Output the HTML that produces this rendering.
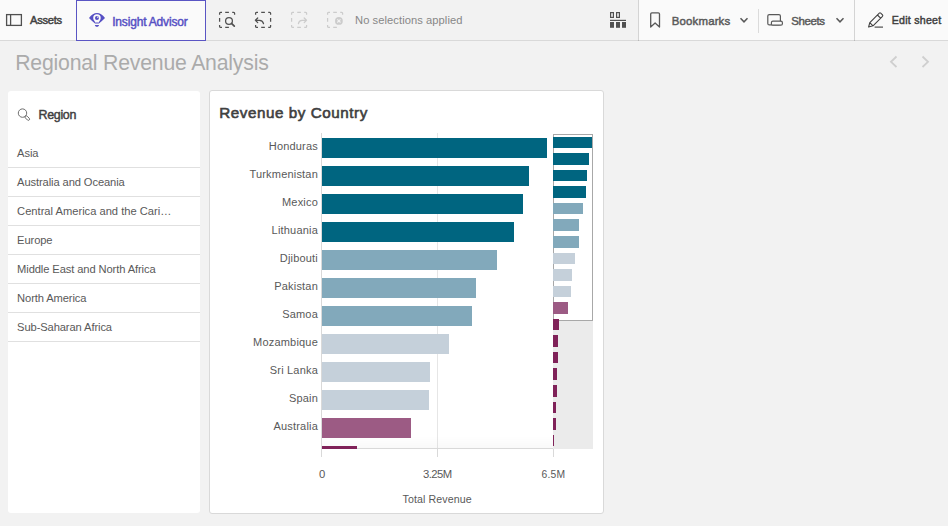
<!DOCTYPE html>
<html><head><meta charset="utf-8">
<style>
*{box-sizing:border-box;margin:0;padding:0}
html,body{width:948px;height:526px;overflow:hidden;background:#f2f2f2;font-family:"Liberation Sans",sans-serif;position:relative}
.abs{position:absolute}
.t{position:absolute;white-space:nowrap;line-height:20px}
#tb{position:absolute;left:0;top:0;width:948px;height:41px;background:#fafafa;border-bottom:1px solid #d9d9d9}
#tbmid{position:absolute;left:206px;top:0;width:432px;height:40px;background:#f2f2f2}
.vsep{position:absolute;width:1px;background:rgba(0,0,0,0.15)}
#ia{position:absolute;left:76px;top:0;width:130px;height:41px;border:1px solid #5a55c4;background:#fafafa}
#fp{position:absolute;left:8px;top:91px;width:192px;height:422px;background:#fff;border-radius:3px}
.li{color:#595959}
.sep{position:absolute;left:8px;width:192px;height:1px;background:#e0e0e0}
#cp{position:absolute;left:209px;top:90px;width:395px;height:424px;background:#fff;border:1px solid #d9d9d9;border-radius:3px}
.bar{position:absolute;left:322px}
.lbl{left:150px;width:168px;text-align:right;color:#595959}
.mbar{position:absolute;left:553px;height:11.6px}
</style></head><body>
<div id="tb"></div>
<div id="tbmid"></div>
<div class="vsep" style="left:638px;top:0;height:41px"></div>
<div class="vsep" style="left:758px;top:9px;height:24px;background:rgba(0,0,0,0.12)"></div>
<div class="vsep" style="left:854px;top:0;height:41px"></div>
<div id="ia"></div>
<div class="t" style="left:30.0px;top:9.8px;font-size:11.17px;letter-spacing:-0.26px;color:#404040;font-weight:400;-webkit-text-stroke:0.45px #404040;">Assets</div>
<div class="t" style="left:112.2px;top:11.5px;font-size:12.01px;letter-spacing:-0.179px;color:#5650c4;font-weight:400;-webkit-text-stroke:0.45px #5650c4;">Insight Advisor</div>
<div class="t" style="left:355.0px;top:9.8px;font-size:11.17px;letter-spacing:0.07px;color:#878787;font-weight:400;">No selections applied</div>
<div class="t" style="left:671.8px;top:10.7px;font-size:11.45px;letter-spacing:0.15px;color:#595959;font-weight:400;-webkit-text-stroke:0.45px #595959;">Bookmarks</div>
<div class="t" style="left:791.2px;top:10.7px;font-size:11.45px;letter-spacing:-0.36px;color:#595959;font-weight:400;-webkit-text-stroke:0.45px #595959;">Sheets</div>
<div class="t" style="left:891.7px;top:10.1px;font-size:10.61px;letter-spacing:0.256px;color:#404040;font-weight:400;-webkit-text-stroke:0.45px #404040;">Edit sheet</div>
<div class="t" style="left:15.2px;top:52.8px;font-size:21.23px;letter-spacing:-0.196px;color:#ababab;font-weight:400;">Regional Revenue Analysis</div>
<div id="fp"></div>
<div class="t" style="left:38.6px;top:105.2px;font-size:12.43px;letter-spacing:-0.32px;color:#404040;font-weight:400;-webkit-text-stroke:0.45px #404040;">Region</div>
<div class="t li" style="top:143.2px;left:17.1px;font-size:11.17px;letter-spacing:-0.105px">Asia</div><div class="sep" style="top:167px"></div><div class="t li" style="top:172.2px;left:17.1px;font-size:11.17px;letter-spacing:-0.105px">Australia and Oceania</div><div class="sep" style="top:196px"></div><div class="t li" style="top:201.2px;left:17.1px;font-size:11.17px;letter-spacing:-0.005px">Central America and the Cari…</div><div class="sep" style="top:225px"></div><div class="t li" style="top:230.2px;left:17.1px;font-size:11.17px;letter-spacing:-0.105px">Europe</div><div class="sep" style="top:254px"></div><div class="t li" style="top:259.2px;left:17.1px;font-size:11.17px;letter-spacing:-0.105px">Middle East and North Africa</div><div class="sep" style="top:283px"></div><div class="t li" style="top:288.2px;left:17.1px;font-size:11.17px;letter-spacing:-0.105px">North America</div><div class="sep" style="top:312px"></div><div class="t li" style="top:317.2px;left:17.1px;font-size:11.17px;letter-spacing:-0.105px">Sub-Saharan Africa</div><div class="sep" style="top:341px"></div>
<div id="cp"></div>
<div class="t" style="left:219.2px;top:102.80000000000001px;font-size:15.22px;letter-spacing:0.553px;color:#404040;font-weight:400;-webkit-text-stroke:0.6px #404040;">Revenue by Country</div>
<div class="abs" style="left:321px;top:133px;width:1px;height:324px;background:#d9d9d9"></div>
<div class="abs" style="left:437px;top:133px;width:1px;height:315px;background:#e6e6e6"></div>
<div class="abs" style="left:437px;top:449px;width:1px;height:8px;background:#d9d9d9"></div>
<div class="abs" style="left:553px;top:448px;width:1px;height:9px;background:#d9d9d9"></div>
<div class="abs" style="left:322px;top:436px;width:231px;height:12px;background:linear-gradient(rgba(0,0,0,0),rgba(0,0,0,0.025))"></div>
<div class="abs" style="left:321px;top:448px;width:232px;height:1px;background:#d9d9d9"></div>
<div class="bar" style="top:138px;width:225.0px;background:#006580;height:19.6px"></div><div class="t lbl" style="top:136.1px;font-size:11.03px;letter-spacing:0.186px">Honduras</div><div class="bar" style="top:166px;width:206.7px;background:#006580;height:19.6px"></div><div class="t lbl" style="top:164.1px;font-size:11.03px;letter-spacing:0.186px">Turkmenistan</div><div class="bar" style="top:194px;width:200.6px;background:#006580;height:19.6px"></div><div class="t lbl" style="top:192.1px;font-size:11.03px;letter-spacing:0.186px">Mexico</div><div class="bar" style="top:222px;width:191.5px;background:#006580;height:19.6px"></div><div class="t lbl" style="top:220.1px;font-size:11.03px;letter-spacing:0.186px">Lithuania</div><div class="bar" style="top:250px;width:175.4px;background:#82a9bb;height:19.6px"></div><div class="t lbl" style="top:248.1px;font-size:11.03px;letter-spacing:0.186px">Djibouti</div><div class="bar" style="top:278px;width:153.5px;background:#82a9bb;height:19.6px"></div><div class="t lbl" style="top:276.1px;font-size:11.03px;letter-spacing:0.186px">Pakistan</div><div class="bar" style="top:306px;width:149.8px;background:#82a9bb;height:19.6px"></div><div class="t lbl" style="top:304.1px;font-size:11.03px;letter-spacing:0.186px">Samoa</div><div class="bar" style="top:334px;width:127.3px;background:#c5d0da;height:19.6px"></div><div class="t lbl" style="top:332.1px;font-size:11.03px;letter-spacing:0.186px">Mozambique</div><div class="bar" style="top:362px;width:107.8px;background:#c5d0da;height:19.6px"></div><div class="t lbl" style="top:360.1px;font-size:11.03px;letter-spacing:0.186px">Sri Lanka</div><div class="bar" style="top:390px;width:107.1px;background:#c5d0da;height:19.6px"></div><div class="t lbl" style="top:388.1px;font-size:11.03px;letter-spacing:0.186px">Spain</div><div class="bar" style="top:418px;width:88.5px;background:#9c5b84;height:19.6px"></div><div class="t lbl" style="top:416.1px;font-size:11.03px;letter-spacing:0.186px">Australia</div><div class="bar" style="top:446px;width:35.3px;background:#802259;height:3px"></div>
<div class="abs" style="left:553px;top:134px;width:40px;height:315px;background:#ebebeb"></div>
<div class="abs" style="left:553px;top:134px;width:40px;height:187px;background:#fff;border:1px solid #a8a8a8"></div>
<div class="mbar" style="top:136.6px;width:38.6px;background:#006580"></div><div class="mbar" style="top:153.2px;width:35.5px;background:#006580"></div><div class="mbar" style="top:169.7px;width:34.4px;background:#006580"></div><div class="mbar" style="top:186.3px;width:32.9px;background:#006580"></div><div class="mbar" style="top:202.8px;width:30.1px;background:#82a9bb"></div><div class="mbar" style="top:219.4px;width:26.3px;background:#82a9bb"></div><div class="mbar" style="top:236.0px;width:25.7px;background:#82a9bb"></div><div class="mbar" style="top:252.5px;width:21.8px;background:#c5d0da"></div><div class="mbar" style="top:269.1px;width:18.5px;background:#c5d0da"></div><div class="mbar" style="top:285.6px;width:18.4px;background:#c5d0da"></div><div class="mbar" style="top:302.2px;width:15.2px;background:#9c5b84"></div><div class="mbar" style="top:318.8px;width:6.1px;background:#802259"></div><div class="mbar" style="top:335.3px;width:5.2px;background:#802259"></div><div class="mbar" style="top:351.9px;width:4.5px;background:#802259"></div><div class="mbar" style="top:368.4px;width:4.0px;background:#802259"></div><div class="mbar" style="top:385.0px;width:3.9px;background:#802259"></div><div class="mbar" style="top:401.6px;width:3.2px;background:#802259"></div><div class="mbar" style="top:418.1px;width:2.6px;background:#802259"></div><div class="mbar" style="top:434.7px;width:1.1px;background:#802259"></div>
<div class="t" style="left:319px;top:463.9px;font-size:11.31px;color:#595959">0</div>
<div class="t" style="left:423.0px;top:463.9px;font-size:11.31px;letter-spacing:-0.575px;color:#595959;font-weight:400;">3.25M</div>
<div class="t" style="left:541.6px;top:464.8px;font-size:10.34px;letter-spacing:0.2px;color:#595959;font-weight:400;">6.5M</div>
<div class="t" style="left:402.5px;top:488.7px;font-size:10.61px;letter-spacing:0.108px;color:#595959;font-weight:400;">Total Revenue</div>

<svg class="abs" style="left:0;top:0" width="948" height="130">
  <rect x="6.6" y="14.6" width="14.8" height="10.8" fill="none" stroke="#505050" stroke-width="1.3"/>
  <line x1="10.6" y1="14.6" x2="10.6" y2="25.4" stroke="#505050" stroke-width="1.3"/>
  <!-- eye -->
  <path d="M89,17.9 C91.5,14.5 94.2,12.9 97,12.9 C99.8,12.9 102.5,14.5 105,17.9 C103,20.2 100.8,21.8 99,23.6 H95 C93.2,21.8 91,20.2 89,17.9 Z" fill="#5650c4"/>
  <path d="M93.2,18 A3.75,3.75 0 1 1 100.7,18 C100.7,19.5 99.9,20.5 99.2,21.4 L98.9,22.4 H95.1 L94.8,21.4 C94.1,20.5 93.2,19.5 93.2,18 Z" fill="#fafafa"/>
  <circle cx="96.95" cy="17.9" r="2" fill="#5650c4"/>
  <circle cx="97.7" cy="17.2" r="0.65" fill="#fafafa"/>
  <path d="M94.9,24.9 H99 C99,26 98.1,26.8 96.95,26.8 C95.8,26.8 94.9,26 94.9,24.9 Z" fill="#5650c4"/>
  <g transform="translate(219.6,12.4)"><path d="M0,2.4 V0.9 Q0,0 0.9,0 H2.4 M5.6,0 H9.3 M12.6,0 H14.1 Q15,0 15,0.9 V2.4 M9.3,15 H5.6 M2.4,15 H0.9 Q0,15 0,14.1 V12.6 M0,9.3 V5.7" fill="none" stroke="#505050" stroke-width="1.25"/></g>
  <circle cx="229" cy="20.9" r="3.4" fill="none" stroke="#505050" stroke-width="1.25"/>
  <line x1="231.5" y1="23.4" x2="234.3" y2="26.2" stroke="#505050" stroke-width="1.7" stroke-linecap="round"/>
  <g transform="translate(255.6,12.4)"><path d="M0,2.4 V0.9 Q0,0 0.9,0 H2.4 M5.6,0 H9.3 M12.6,0 H14.1 Q15,0 15,0.9 V2.4 M15,5.7 V9.3 M15,12.6 V14.1 Q15,15 14.1,15 H12.6 M9.3,15 H5.6 M2.4,15 H0.9 Q0,15 0,14.1 V12.6" fill="none" stroke="#505050" stroke-width="1.25"/></g>
  <path d="M257.7,18 L255.4,20.3 L257.7,22.6 M255.4,20.3 H259.5 Q262.8,20.5 263.5,23.6" fill="none" stroke="#505050" stroke-width="1.25" stroke-linecap="round" stroke-linejoin="round"/>
  <g transform="translate(291.6,12.4)"><path d="M0,2.4 V0.9 Q0,0 0.9,0 H2.4 M5.6,0 H9.3 M12.6,0 H14.1 Q15,0 15,0.9 V2.4 M15,12.6 V14.1 Q15,15 14.1,15 H12.6 M9.3,15 H5.6 M2.4,15 H0.9 Q0,15 0,14.1 V12.6 M0,9.3 V5.7" fill="none" stroke="#cccccc" stroke-width="1.25"/></g>
  <path d="M304.2,18 L306.5,20.3 L304.2,22.6 M306.5,20.3 H302 Q299,20.5 298.4,23.6" fill="none" stroke="#cccccc" stroke-width="1.25" stroke-linecap="round" stroke-linejoin="round"/>
  <g transform="translate(327.6,12.4)"><path d="M0,2.4 V0.9 Q0,0 0.9,0 H2.4 M5.6,0 H9.3 M12.6,0 H14.1 Q15,0 15,0.9 V2.4 M9.3,15 H5.6 M2.4,15 H0.9 Q0,15 0,14.1 V12.6 M0,9.3 V5.7" fill="none" stroke="#cccccc" stroke-width="1.25"/></g>
  <circle cx="338.9" cy="20.9" r="3.9" fill="#cccccc"/>
  <path d="M337.3,19.3 L340.5,22.5 M340.5,19.3 L337.3,22.5" stroke="#f2f2f2" stroke-width="1.1"/>
  <!-- grid icon -->
  <rect x="610.6" y="12.6" width="2.8" height="4.8" fill="none" stroke="#505050" stroke-width="1.2"/>
  <rect x="616.6" y="12.6" width="2.8" height="4.8" fill="none" stroke="#505050" stroke-width="1.2"/>
  <rect x="610" y="19.8" width="16" height="1.2" fill="#505050"/>
  <rect x="610" y="22" width="4" height="5.8" fill="#505050"/>
  <rect x="616" y="22" width="4" height="5.8" fill="#505050"/>
  <rect x="622" y="22" width="4" height="5.8" fill="#505050"/>
  <!-- bookmark -->
  <path d="M650.7,14 Q650.7,12.8 651.9,12.8 H658.3 Q659.5,12.8 659.5,14 V27 L655.1,23 L650.7,27 Z" fill="none" stroke="#595959" stroke-width="1.3" stroke-linejoin="round"/>
  <polyline points="740.5,18.2 744,21.8 747.5,18.2" fill="none" stroke="#595959" stroke-width="1.5"/>
  <!-- sheets -->
  <rect x="767.8" y="14.6" width="12.6" height="10.3" rx="1.5" fill="none" stroke="#595959" stroke-width="1.2"/>
  <rect x="771.4" y="21.2" width="11" height="4" rx="1.5" fill="#fafafa" stroke="#595959" stroke-width="1.2"/>
  <polyline points="836.5,18.2 840,21.8 843.5,18.2" fill="none" stroke="#595959" stroke-width="1.5"/>
  <!-- pencil -->
  <path d="M868.6,27 L869.8,22.6 L879.3,13.1 Q880,12.5 880.7,13.1 L882.5,14.9 Q883.1,15.6 882.5,16.3 L873,25.8 Z M877.4,15 L880.6,18.2 M869.8,22.6 L873,25.8" fill="none" stroke="#404040" stroke-width="1.1" stroke-linejoin="round"/>
  <line x1="874.6" y1="27.1" x2="883" y2="27.1" stroke="#404040" stroke-width="1.1"/>
  <!-- search in filter -->
  <circle cx="22.5" cy="113.1" r="4.2" fill="none" stroke="#666" stroke-width="0.95"/>
  <rect x="-2.7" y="-1.25" width="5.4" height="2.5" rx="1.25" transform="translate(27.3,118.1) rotate(45)" fill="#fff" stroke="#666" stroke-width="0.9"/>
  <!-- nav -->
  <polyline points="896.5,56.5 891,61.8 896.5,67" fill="none" stroke="#cfcfcf" stroke-width="1.8"/>
  <polyline points="922.5,56.5 928,61.8 922.5,67" fill="none" stroke="#cfcfcf" stroke-width="1.8"/>
</svg>

</body></html>
